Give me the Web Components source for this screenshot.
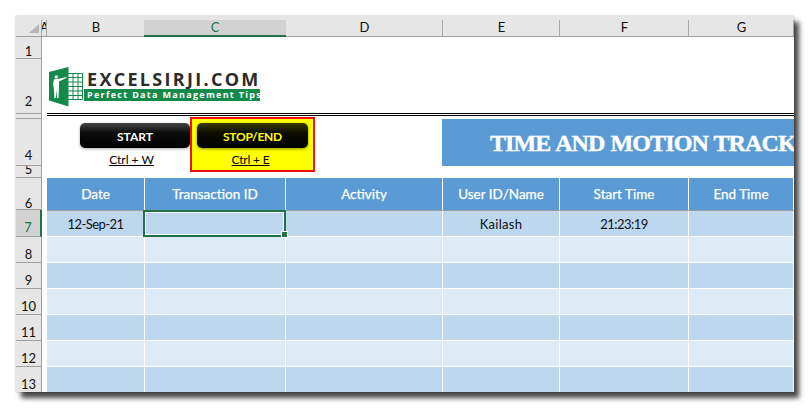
<!DOCTYPE html>
<html>
<head>
<meta charset="utf-8">
<title>Time and Motion Tracker</title>
<style>
    html, body { margin: 0; height: 100%; background: #fff; overflow: hidden; }
    body { padding: 16px 0 0 16px; box-sizing: border-box; font-family: Lato, "Liberation Sans", sans-serif; }
</style>
</head>
<body>
<excel-window>
    <col-label corner></col-label>
    <col-label>A</col-label>
    <col-label>B</col-label>
    <col-label selected>C</col-label>
    <col-label>D</col-label>
    <col-label>E</col-label>
    <col-label>F</col-label>
    <col-label>G</col-label>

    <row-label style="grid-row:2;--lh:14px">1</row-label>
    <row-label style="grid-row:3;--drop:4px">2</row-label>
    <row-label style="grid-row:4"></row-label>
    <row-label style="grid-row:5;--drop:2px">4</row-label>
    <row-label style="grid-row:6">5</row-label>
    <row-label style="grid-row:7;--lh:12px">6</row-label>
    <row-label style="grid-row:8;--drop:1px" selected>7</row-label>
    <row-label style="grid-row:9">8</row-label>
    <row-label style="grid-row:10">9</row-label>
    <row-label style="grid-row:11">10</row-label>
    <row-label style="grid-row:12">11</row-label>
    <row-label style="grid-row:13">12</row-label>
    <row-label style="grid-row:14">13</row-label>

    <brand-logo style="grid-row:3;grid-column:3/6"></brand-logo>
    <double-rule style="grid-row:4;grid-column:3/-1"></double-rule>

    <macro-bar style="grid-row:4/7;grid-column:3/6">
        <macro-button label="START" shortcut="Ctrl + W"></macro-button>
        <macro-button label="STOP/END" shortcut="Ctrl + E" active></macro-button>
    </macro-bar>

    <sheet-banner style="grid-row:5;grid-column:6/-1">TIME AND MOTION TRACKER</sheet-banner>

    <table-row style="grid-row:7" kind="head"><span>Date</span><span>Transaction ID</span><span>Activity</span><span>User ID/Name</span><span>Start Time</span><span>End Time</span></table-row>
    <table-row style="grid-row:8" kind="dark" freeze selected-col="1"><span style="letter-spacing:-.55px">12-Sep-21</span><span></span><span></span><span style="letter-spacing:.3px">Kailash</span><span style="letter-spacing:-.5px">21:23:19</span><span></span></table-row>
    <table-row style="grid-row:9" kind="light"></table-row>
    <table-row style="grid-row:10" kind="dark"></table-row>
    <table-row style="grid-row:11" kind="light"></table-row>
    <table-row style="grid-row:12" kind="dark"></table-row>
    <table-row style="grid-row:13" kind="light"></table-row>
    <table-row style="grid-row:14" kind="dark"></table-row>
</excel-window>

<script>
const COLS = '98px 141px 157px 117px 129px 105px'

class ExcelWindow extends HTMLElement {
    constructor () {
        super()
        this.attachShadow({ mode: 'open' }).innerHTML = `
            <style>
                :host {
                    display: grid;
                    width: 778px;
                    height: 376px;
                    overflow: hidden;
                    background: #fff;
                    grid-template-columns: 26px 5px ${COLS};
                    grid-template-rows: 21px 22px 55px 5px 47px 12px 32px 27px 26px 26px 26px 26px 26px 26px;
                    box-shadow: 5px 6px 5px 0 rgba(0,0,0,.72), 0 0 2px rgba(0,0,0,.3);
                }
            </style>
            <slot></slot>
        `
    }
}

class ColLabel extends HTMLElement {
    constructor () {
        super()
        this.attachShadow({ mode: 'open' }).innerHTML = `
            <style>
                :host {
                    display: flex;
                    align-items: flex-end;
                    justify-content: center;
                    position: relative;
                    box-sizing: border-box;
                    background: #e6e6e6;
                    border-bottom: 1px solid #9f9f9f;
                    font-size: 13px;
                    line-height: 17px;
                    color: #111;
                    overflow: hidden;
                }
                :host::after {
                    content: '';
                    position: absolute;
                    right: 0;
                    top: 4px;
                    bottom: 0;
                    width: 1px;
                    background: #a8a8a8;
                }
                :host([selected]) {
                    margin-left: -1px;
                    background: linear-gradient(#e6e6e6 4px, #d2d2d2 4px);
                    border-bottom: 2px solid #217346;
                    color: #217346;
                    line-height: 16px;
                }
                :host([selected])::after { display: none; }
                svg { position: absolute; right: 3px; bottom: 3px; }
            </style>
            ${this.hasAttribute('corner') ? '<svg width="10" height="9"><path d="M10 0V9H0Z" fill="#b5b5b5"/></svg>' : ''}
            <slot></slot>
        `
    }
}

class RowLabel extends HTMLElement {
    constructor () {
        super()
        this.attachShadow({ mode: 'open' }).innerHTML = `
            <style>
                :host {
                    grid-column: 1;
                    display: flex;
                    align-items: flex-end;
                    justify-content: center;
                    box-sizing: border-box;
                    background: #e6e6e6;
                    border-bottom: 1px solid #9f9f9f;
                    border-right: 1px solid #9f9f9f;
                    padding-bottom: var(--drop, 0);
                    font-size: 13px;
                    line-height: var(--lh, 16px);
                    color: #111;
                    overflow: hidden;
                }
                :host([selected]) {
                    background: #d2d2d2;
                    border-right: 2px solid #217346;
                    color: #217346;
                }
            </style>
            <slot></slot>
        `
    }
}

class BrandLogo extends HTMLElement {
    constructor () {
        super()
        this.attachShadow({ mode: 'open' }).innerHTML = `
            <style>
                :host {
                    display: flex;
                    align-items: flex-start;
                    gap: 2px;
                    margin: 8px 0 0 2px;
                    font-family: "Open Sans", sans-serif;
                }
                svg { display: block; flex: none; }
                .words { display: flex; flex-direction: column; margin-top: 2px; }
                .name {
                    padding-left: 2px;
                    font-size: 18px;
                    line-height: 20px;
                    font-weight: 700;
                    letter-spacing: 2.3px;
                    color: #2b2b2b;
                    white-space: nowrap;
                }
                .tag {
                    width: 176px;
                    margin-left: -1px;
                    background: #13894a;
                    color: #fff;
                    font-size: 9px;
                    line-height: 12px;
                    font-weight: 700;
                    letter-spacing: 1.3px;
                    padding-left: 3px;
                    box-sizing: border-box;
                    white-space: nowrap;
                    overflow: hidden;
                }
            </style>
            <svg width="34" height="40" viewBox="0 0 34 40">
                <path d="M0 5 19.5 0V39.5L0 33.5Z" fill="#13894a"/>
                <path d="M19 6.5H33.5V32.5H19Z" fill="#fff" stroke="#13894a"/>
                <path d="M19 10.5H33M19 15H33M19 19.5H33M19 24H33M19 28.5H33M24 7V32M29 7V32" stroke="#13894a" stroke-width="1" fill="none"/>
                <circle cx="7.3" cy="10" r="1.7" fill="#fff"/>
                <path d="M5 12.3 9 12 17.5 10 17.7 10.7 10 14.6V21L9.5 31H8L7.4 23 6.8 31H5.3L5 22 4 17.5Z" fill="#fff"/>
            </svg>
            <div class="words">
                <div class="name">EXCELSIRJI.COM</div>
                <div class="tag">Perfect Data Management Tips</div>
            </div>
        `
    }
}

class DoubleRule extends HTMLElement {
    constructor () {
        super()
        this.attachShadow({ mode: 'open' }).innerHTML = `
            <style>
                :host {
                    display: block;
                    height: 1px;
                    margin-top: -1px;
                    border-top: 1px solid #000;
                    border-bottom: 1px solid #000;
                }
            </style>
        `
    }
}

class MacroBar extends HTMLElement {
    constructor () {
        super()
        this.attachShadow({ mode: 'open' }).innerHTML = `
            <style>
                :host {
                    display: flex;
                    align-items: flex-start;
                    padding: 3px 0 0 33px;
                    z-index: 2;
                }
            </style>
            <slot></slot>
        `
    }
}

class MacroButton extends HTMLElement {
    constructor () {
        super()
        this.attachShadow({ mode: 'open' }).innerHTML = `
            <style>
                :host {
                    display: flex;
                    flex-direction: column;
                    align-items: center;
                    box-sizing: border-box;
                    width: 110px;
                    padding-top: 6px;
                    font-size: 12px;
                    color: #000;
                }
                :host([active]) {
                    width: 125px;
                    height: 55px;
                    padding-top: 4px;
                    background: #ffff00;
                    border: 2px solid #ee1111;
                }
                .btn {
                    flex: none;
                    box-sizing: border-box;
                    width: 110px;
                    height: 25px;
                    border-radius: 5px;
                    background: linear-gradient(#444, #0c0c0c 40%, #000);
                    color: #fff;
                    font-weight: 700;
                    font-size: 12px;
                    line-height: 27px;
                    text-align: center;
                    box-shadow: 0 1px 3px rgba(0,0,0,.35);
                }
                :host([active]) .btn {
                    width: 111px;
                    background: linear-gradient(#3c3a00, #0c0c00 40%, #000);
                    color: #ffff00;
                    letter-spacing: -.25px;
                    box-shadow: 0 1px 3px rgba(60,60,0,.6);
                }
                .key {
                    margin: 5px 7px 0 0;
                    line-height: 13px;
                    text-decoration: underline;
                }
                :host([active]) .key { margin-right: 4px; letter-spacing: -.2px; }
            </style>
            <div class="btn">${this.getAttribute('label')}</div>
            <div class="key">${this.getAttribute('shortcut')}</div>
        `
    }
}

class SheetBanner extends HTMLElement {
    constructor () {
        super()
        this.attachShadow({ mode: 'open' }).innerHTML = `
            <style>
                :host {
                    display: flex;
                    align-items: center;
                    overflow: hidden;
                    margin-left: -1px;
                    background: #5b9bd5;
                    color: #fff;
                    padding: 2px 0 0 48px;
                    font-family: "Liberation Serif", serif;
                    font-weight: 700;
                    font-size: 24px;
                    letter-spacing: -.9px;
                    word-spacing: 1px;
                    -webkit-text-stroke: .4px #fff;
                    white-space: nowrap;
                }
            </style>
            <slot></slot>
        `
    }
}

class TableRow extends HTMLElement {
    constructor () {
        super()
        const root = this.attachShadow({ mode: 'open' })
        root.innerHTML = `
            <style>
                :host {
                    grid-column: 3 / -1;
                    display: grid;
                    grid-template-columns: ${COLS};
                    position: relative;
                    box-sizing: border-box;
                    font-size: 13px;
                    color: #111;
                }
                :host([kind="head"]) { color: #fff; font-size: 13.5px; -webkit-text-stroke: .25px #fff; }
                :host([freeze]) { border-top: 1px solid #9f9f9f; }
                .cell {
                    display: flex;
                    align-items: center;
                    justify-content: center;
                    box-sizing: border-box;
                    border-right: 1px solid #fff;
                    border-bottom: 1px solid #fff;
                    white-space: nowrap;
                    position: relative;
                }
                :host([kind="head"]) .cell { background: #5b9bd5; border-bottom: 0; }
                :host([kind="dark"]) .cell { background: #bdd7ee; }
                :host([kind="light"]) .cell { background: #ddebf7; }
                .cell.sel { z-index: 3; }
                .cell.sel::before {
                    content: '';
                    position: absolute;
                    left: -2px;
                    right: -1px;
                    top: -1px;
                    bottom: -1px;
                    border: 2px solid #217346;
                    box-shadow: inset 0 0 0 1px #fff;
                }
                .cell.sel::after {
                    content: '';
                    position: absolute;
                    right: -2px;
                    bottom: -1px;
                    width: 5px;
                    height: 5px;
                    background: #217346;
                    box-shadow: 0 0 0 1px #fff;
                }
            </style>
        `
        const spans = Array.from(this.querySelectorAll('span'))
        const sel = this.getAttribute('selected-col')
        for (let i = 0; i < 6; i++) {
            const c = document.createElement('div')
            c.className = 'cell' + (String(i) === sel ? ' sel' : '')
            if (spans[i]) {
                c.textContent = spans[i].textContent
                c.style.cssText = spans[i].style.cssText
            }
            root.appendChild(c)
        }
    }
}

customElements.define('excel-window', ExcelWindow)
customElements.define('col-label', ColLabel)
customElements.define('row-label', RowLabel)
customElements.define('brand-logo', BrandLogo)
customElements.define('double-rule', DoubleRule)
customElements.define('macro-bar', MacroBar)
customElements.define('macro-button', MacroButton)
customElements.define('sheet-banner', SheetBanner)
customElements.define('table-row', TableRow)
</script>
</body>
</html>
